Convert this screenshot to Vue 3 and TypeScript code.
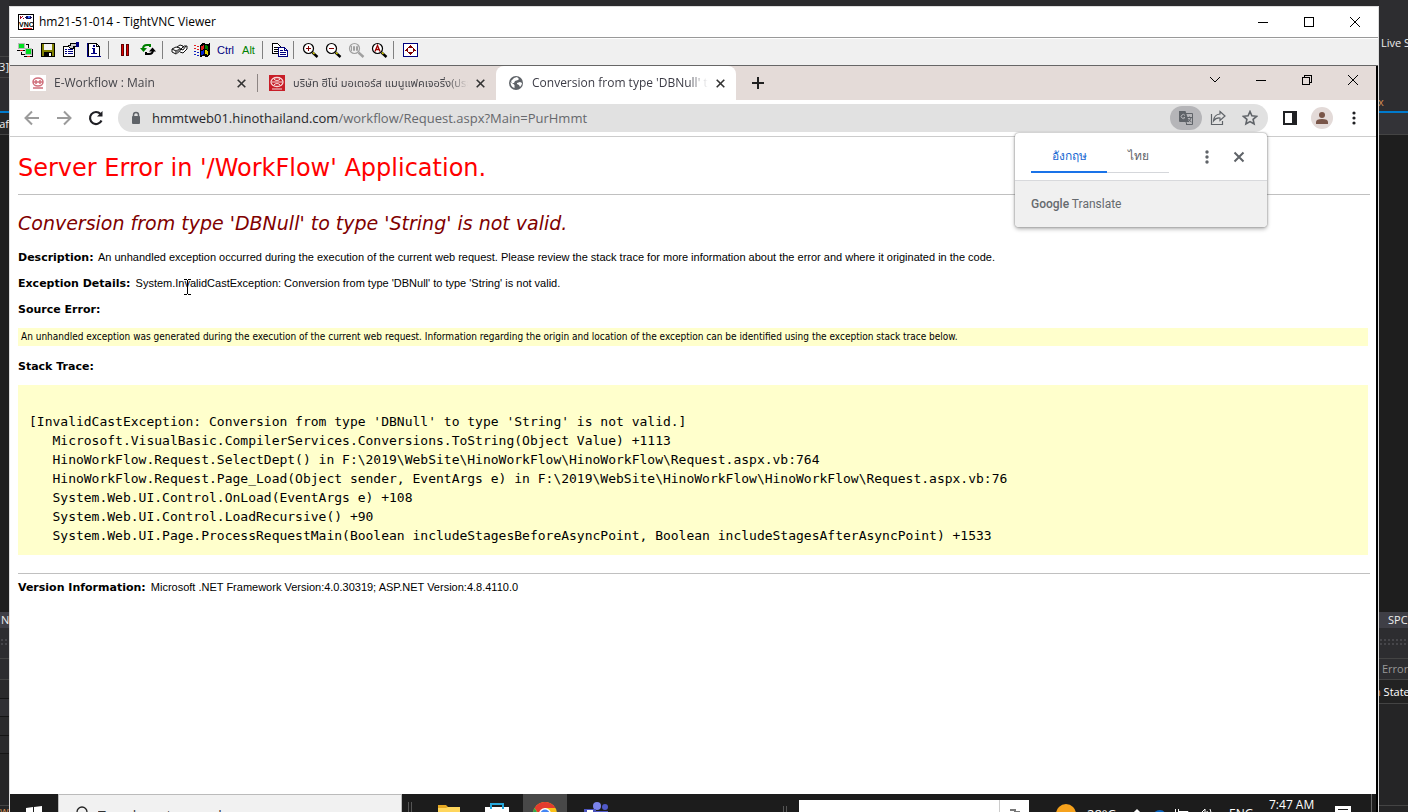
<script setup lang="ts">
interface Tool { id: string; label: string; sep?: boolean }
const tools: Tool[] = [
  { id: 'connect', label: 'New connection' },
  { id: 'save', label: 'Save session' },
  { id: 'options', label: 'Connection options' },
  { id: 'info', label: 'Connection info' },
  { id: 'pause', label: 'Pause', sep: true },
  { id: 'refresh', label: 'Refresh screen' },
  { id: 'cad', label: 'Send Ctrl-Alt-Del', sep: true },
  { id: 'win', label: 'Send Win key' },
  { id: 'ctrl', label: 'Ctrl' },
  { id: 'alt', label: 'Alt' },
  { id: 'copy', label: 'Transfer files', sep: true },
  { id: 'zin', label: 'Zoom in', sep: true },
  { id: 'zout', label: 'Zoom out' },
  { id: 'z100', label: 'Zoom 100%' },
  { id: 'zauto', label: 'Zoom auto' },
  { id: 'full', label: 'Full screen', sep: true },
]
const trace = `[InvalidCastException: Conversion from type 'DBNull' to type 'String' is not valid.]
   Microsoft.VisualBasic.CompilerServices.Conversions.ToString(Object Value) +1113
   HinoWorkFlow.Request.SelectDept() in F:\\2019\\WebSite\\HinoWorkFlow\\HinoWorkFlow\\Request.aspx.vb:764
   HinoWorkFlow.Request.Page_Load(Object sender, EventArgs e) in F:\\2019\\WebSite\\HinoWorkFlow\\HinoWorkFlow\\Request.aspx.vb:76
   System.Web.UI.Control.OnLoad(EventArgs e) +108
   System.Web.UI.Control.LoadRecursive() +90
   System.Web.UI.Page.ProcessRequestMain(Boolean includeStagesBeforeAsyncPoint, Boolean includeStagesAfterAsyncPoint) +1533`
</script>

<template>
  <div class="desktop">
    <aside class="side left">
      <div class="s-top"><span class="brk">3]</span></div>
      <div class="s-tab"><span>raf</span></div>
      <div class="s-code"></div>
      <div class="s-bar"><span>N</span></div>
      <div class="s-dots"></div>
      <div class="s-box"></div>
      <div class="s-cells"><i></i><i class="lit"></i><i></i><i></i></div>
      <div class="s-rest"></div>
      <div class="s-foot">w</div>
    </aside>

    <main class="window">
      <header class="titlebar">
        <svg class="vnc" width="16" height="16" viewBox="0 0 16 16" shape-rendering="crispEdges">
          <rect x=".5" y=".5" width="15" height="15" fill="#fff" stroke="#000" />
          <path d="M2 2h1v1h1v1h-1v1h-1zM4 2h1v1h-1zM5 4h1v1h-1z" fill="#a00020" />
          <path d="M7 3h1V2h5v1h1v1h-1v1H8V4H7z" fill="#101060" /><rect x="10" y="2" width="2" height="2" fill="#4070ff" />
          <text x="1" y="13" font-size="7" font-weight="bold" font-family="Liberation Sans">VNC</text>
          <path d="M5 14.500h9" stroke="#e02020" />
        </svg>
        <h1>hm21-51-014 - TightVNC Viewer</h1>
        <button class="wc" aria-label="Minimize"><svg width="12" height="12"><path d="M1 6.500h10" /></svg></button>
        <button class="wc" aria-label="Maximize"><svg width="12" height="12"><path d="M1.500 1.500h9v9h-9z" /></svg></button>
        <button class="wc" aria-label="Close"><svg class="smooth" width="12" height="12"><path d="M1 1l10 10M11 1L1 11" /></svg></button>
      </header>

      <nav class="vncbar" aria-label="Viewer toolbar">
        <template v-for="t in tools" :key="t.id">
          <span v-if="t.sep" class="sep"></span>
          <button :aria-label="t.label" :class="t.id">
            <template v-if="t.id === 'ctrl' || t.id === 'alt'">{{ t.label }}</template>
            <svg v-else width="17" height="16" viewBox="0 0 17 16" shape-rendering="crispEdges" fill="none">
              <g v-if="t.id === 'connect'">
                <rect x="1.500" y="1.500" width="6" height="5" fill="#00e020" stroke="#b8b8b8" /><path d="M0 8.500h8M9 2.500h2.500v3" stroke="#000" /><path d="M3 8.500h3" stroke="#e02020" />
                <rect x="8.500" y="6.500" width="6" height="6" fill="#00e020" stroke="#b8b8b8" /><path d="M7 14.500h9M15.500 7v7M4.500 10v2h3" stroke="#000" /><path d="M10 14.500h3" stroke="#e02020" />
              </g>
              <g v-else-if="t.id === 'save'">
                <rect x="1.500" y="1.500" width="13" height="13" fill="#808000" stroke="#000" /><rect x="4" y="2" width="8" height="6" fill="#f4f4f4" /><rect x="4" y="10" width="8" height="4" fill="#000" /><rect x="9" y="11" width="2" height="3" fill="#fff" />
              </g>
              <g v-else-if="t.id === 'options'">
                <path d="M.5 4.500h11v10H.500z" fill="#fff" stroke="#000" /><path d="M2 7.500h2M5 7.500h5M2 9.500h2M5 9.500h5M2 11.500h2M5 11.500h5" stroke="#000080" /><path d="M5.500 4.500V3.500h2v-2h6v3h-3v2h-3z" fill="#ccc" stroke="#000" /><path d="M13 0h3v5h-3z" fill="#000080" />
              </g>
              <g v-else-if="t.id === 'info'">
                <path d="M2.500 1.500h8l3 3v10h-11z" fill="#fff" stroke="#000" /><path d="M10.500 1.500v3h3" stroke="#000" /><path d="M1.500 1v13.500H15" stroke="#000080" /><path d="M7 3h2v2H7zM6 6h3v5h2v1H5v-1h2V7H6z" fill="#000080" />
              </g>
              <g v-else-if="t.id === 'pause'"><path d="M4.500 2.500h2v11h-2zM9.500 2.500h2v11h-2z" fill="#e00000" stroke="#600000" /></g>
              <g v-else-if="t.id === 'refresh'" shape-rendering="auto">
                <path d="M3 7q0-4 4-4h3v2" stroke="#008000" stroke-width="2" /><path d="M0 6h7L3.500 10z" fill="#008000" /><path d="M13 8q0 4-4 4H6v-2" stroke="#000" stroke-width="2" /><path d="M16 9.500H9L12.500 5.500z" fill="#000" />
              </g>
              <g v-else-if="t.id === 'cad'" shape-rendering="auto">
                <path d="M1 7l4-2 4 1v3l-4 3-4-2zM1 7l4 2 4-2M5 9v3M6 5l3-2 3 1v2M9 8l4-4h3v3l-4 4-3-1M9 7l3 1 3-4" stroke="#111" fill="#fff" /><path d="M5 9l4-2v2l-4 3z" fill="#777" />
              </g>
              <g v-else-if="t.id === 'win'">
                <path d="M6 3l3-2 4 1 3-1v12l-3 2-4-1-3 1z" fill="#000" /><path d="M7 4l3-1v4l-3 1z" fill="#e02020" /><path d="M11 3l3 1v4l-3-1z" fill="#008000" /><path d="M7 9l3-1v4l-3 1z" fill="#0020d0" /><path d="M11 8l3 1v4l-3-1z" fill="#e0d000" /><path d="M0 3.500h2M3 4.500h2M0 6.500h2M3 7.500h2" stroke="#e02020" /><path d="M0 9.500h2M3 10.500h2M0 12.500h2M3 13.500h2" stroke="#1020c0" />
              </g>
              <g v-else-if="t.id === 'copy'">
                <path d="M1.500 1.500h5l3 3v7h-8z" fill="#fff" stroke="#000" /><path d="M3 5.500h4M3 7.500h4M3 9.500h4" stroke="#000" /><path d="M7.500 5.500h6l3 3v6h-9z" fill="#fff" stroke="#000080" /><path d="M13.500 5.500v3h3M9 8.500h3M9 10.500h6M9 12.500h6" stroke="#000080" />
              </g>
              <g v-else-if="t.id === 'full'">
                <rect x="1.500" y="1.500" width="14" height="13" fill="#fff" stroke="#000080" />
                <path d="M8 3h1v1h1v1h1v1H6V5h1V4h1zM8 13h1v-1h1v-1h1v-1H6v1h1v1h1zM3 8h1V7h1V6h1v4H5V9H3zM14 8h-1V7h-1V6h-1v4h1V9h2z" fill="#800000" />
              </g>
              <g v-else shape-rendering="auto" :stroke="t.id === 'z100' ? '#a0a0a0' : '#000'">
                <circle cx="6.500" cy="6.500" r="5" :fill="t.id === 'z100' ? '#eee' : '#fff'" stroke-width="1.200" />
                <path d="M10.500 10.500l5 4.500" stroke-width="2.400" />
                <path v-if="t.id !== 'z100'" d="M11 10.500l1.500 1.500" stroke="#d8d000" stroke-width="1.500" />
                <path v-if="t.id === 'zin'" d="M4 6.500h5M6.500 4v5" stroke="#800000" />
                <path v-if="t.id === 'zout'" d="M4 6.500h5" stroke="#800000" />
                <path v-if="t.id === 'z100'" d="M3.500 4v5M5.500 4.500h1v4h-1zM8.500 4.500h1v4h-1z" />
                <path v-if="t.id === 'zauto'" d="M4 9.500l2.500-6 2.500 6M5 7.500h3" stroke="#a00000" stroke-width="1.300" />
              </g>
            </svg>
          </button>
        </template>
      </nav>

      <section class="remote">
        <div class="tabstrip">
          <div class="tab">
            <svg class="fav" width="16" height="16"><rect width="16" height="16" fill="#fff" /><ellipse cx="8" cy="7" rx="5" ry="4" fill="none" stroke="#d0707c" stroke-width="1.500" /><path d="M3 7h10M6 5v4M10 5v4M3 13h10" stroke="#d0707c" stroke-width="1.500" /></svg>
            <span class="tt">E-Workflow : Main</span>
            <button class="x" aria-label="Close tab"><svg width="9" height="9"><path d="M.7.700l7.600 7.600M8.300.700L.7 8.300" /></svg></button>
          </div>
          <div class="tab second">
            <svg class="fav" width="16" height="16"><rect width="16" height="16" fill="#c81e28" /><ellipse cx="8" cy="7" rx="6" ry="4.500" fill="none" stroke="#f6d8d8" stroke-width="1.300" /><path d="M3 7h10M5 3.500q0 2 3 2t3-2M5 10.500q0-2 3-2t3 2M3 14h10" stroke="#f6d8d8" fill="none" /></svg>
            <span class="tt thai">บริษัท ฮีโน่ มอเตอร์ส แมนูแฟคเจอริ่ง(ประเทศไทย)</span>
            <button class="x" aria-label="Close tab"><svg width="9" height="9"><path d="M.7.700l7.600 7.600M8.300.700L.7 8.300" /></svg></button>
          </div>
          <div class="tab active">
            <svg class="fav" width="16" height="16"><circle cx="8" cy="8" r="7" fill="#5f6368" /><path d="M2.500 7l3 2 1 1v3q-4-1-4-6zM6 3l3-1 2 2-1 1-3 1-1 2H4L3 6zM9 8l3-1 2 1q0 2-2 4l-1-2-2-1z" fill="#fff" /></svg>
            <span class="tt">Conversion from type 'DBNull' to type</span>
            <button class="x" aria-label="Close tab"><svg width="9" height="9"><path d="M.7.700l7.600 7.600M8.300.700L.7 8.300" /></svg></button>
          </div>
          <button class="plus" aria-label="New tab"><svg width="12" height="12"><path d="M6 0v12M0 6h12" /></svg></button>
          <span class="grow"></span>
          <button class="cc" aria-label="Search tabs"><svg class="smooth" width="12" height="12"><path d="M1 3l5 5 5-5" /></svg></button>
          <button class="cc" aria-label="Minimize"><svg width="12" height="12"><path d="M1 6.500h10" /></svg></button>
          <button class="cc" aria-label="Restore"><svg width="12" height="12"><path d="M1.500 3.500h7v7h-7zM3.500 3V1.500h7v7H9" /></svg></button>
          <button class="cc" aria-label="Close"><svg class="smooth" width="12" height="12"><path d="M1 1l10 10M11 1L1 11" /></svg></button>
        </div>

        <div class="addressbar">
          <button class="nb" aria-label="Back"><svg width="16" height="16" stroke="#9b9b9b" stroke-width="2" fill="none"><path d="M15 8H2M8 1.500L1.500 8 8 14.500" /></svg></button>
          <button class="nb" aria-label="Forward"><svg width="16" height="16" stroke="#9b9b9b" stroke-width="2" fill="none"><path d="M1 8h13M8 1.500L14.500 8 8 14.500" /></svg></button>
          <button class="nb" aria-label="Reload"><svg width="16" height="16" stroke="#1f1f24" stroke-width="2.200" fill="none"><path d="M13.500 10.500A6 6 0 1 1 12.500 4" /><path d="M14.500 1v5.500H9z" fill="#1f1f24" stroke="none" /></svg></button>
          <div class="omni">
            <svg class="lock" width="12" height="14"><path d="M3.500 6V4a2.500 2.500 0 0 1 5 0v2" fill="none" stroke="#5f6368" stroke-width="1.500" /><rect x="2" y="5" width="8" height="8" rx="1" fill="#5f6368" /></svg>
            <span class="url"><b>hmmtweb01.hinothailand.com</b>/workflow/Request.aspx?Main=PurHmmt</span>
            <button class="pill" aria-label="Translate this page"><svg width="16" height="16"><path d="M5 3.500h9.500v11H8" stroke="#5f6368" fill="none" /><path d="M1 1h6.500l3.500 11H2q-1 0-1-1z" fill="#5f6368" /><path d="M7 5.500A2 2 0 1 0 7 7.500H5.500" stroke="#b5b5b8" fill="none" /><path d="M9 7.500h5M11.500 6.500v1M13 8q-1 3-3 4M10.500 9q1 2 3 3M8 12l1 3" stroke="#5f6368" fill="none" /></svg></button>
            <button class="ob" aria-label="Share"><svg width="16" height="16" fill="none" stroke="#5f6368" stroke-width="1.200"><path d="M1.500 4v10.500h11V11" /><path d="M10 1.500l5 4.500-5 4.500V8Q6 7.500 3.500 11q.5-6.500 6.500-7z" /></svg></button>
            <button class="ob" aria-label="Bookmark this tab"><svg width="16" height="16" fill="none" stroke="#5f6368" stroke-width="1.600"><path d="M8 1.500l1.900 4.300 4.700.5-3.500 3.100 1 4.600L8 11.600 3.900 14l1-4.600-3.500-3.100 4.700-.5z" /></svg></button>
          </div>
          <button class="nb" aria-label="Side panel"><svg width="14" height="14"><rect x="1" y="1" width="12" height="12" fill="#fff" stroke="#202124" stroke-width="2" /><rect x="9" width="5" height="14" fill="#202124" /></svg></button>
          <button class="nb" aria-label="Profile"><svg width="22" height="22"><circle cx="11" cy="11" r="11" fill="#e3dad8" /><circle cx="11" cy="8" r="3" fill="#795548" /><path d="M5 17v-2q0-3 6-3t6 3v2z" fill="#795548" /></svg></button>
          <button class="nb" aria-label="Menu"><svg width="4" height="14" fill="#202124"><circle cx="2" cy="2" r="1.600" /><circle cx="2" cy="7" r="1.600" /><circle cx="2" cy="12" r="1.600" /></svg></button>
        </div>

        <div class="popup" role="dialog" aria-label="Google Translate">
          <div class="poptop">
            <button class="lang on">อังกฤษ</button>
            <button class="lang">ไทย</button>
            <span class="grow"></span>
            <button class="pb" aria-label="Translate options"><svg width="4" height="14" fill="#5f6368"><circle cx="2" cy="2" r="1.700" /><circle cx="2" cy="7" r="1.700" /><circle cx="2" cy="12" r="1.700" /></svg></button>
            <button class="pb" aria-label="Close"><svg width="12" height="12"><path d="M1.500 1.500l9 9M10.500 1.500l-9 9" stroke="#5f6368" stroke-width="2" /></svg></button>
          </div>
          <div class="popbot"><b>Google</b> Translate</div>
        </div>

        <article class="page">
          <h1>Server Error in '/WorkFlow' Application.</h1>
          <hr>
          <h2>Conversion from type 'DBNull' to type 'String' is not valid.</h2>
          <p><b>Description:</b> An unhandled exception occurred during the execution of the current web request. Please review the stack trace for more information about the error and where it originated in the code.</p>
          <p><b>Exception Details:</b> System.InvalidCastException: Conversion from type 'DBNull' to type 'String' is not valid.</p>
          <p><b>Source Error:</b></p>
          <div class="note">An unhandled exception was generated during the execution of the current web request. Information regarding the origin and location of the exception can be identified using the exception stack trace below.</div>
          <p><b>Stack Trace:</b></p>
          <pre>{{ trace }}</pre>
          <hr class="end">
          <p class="ver"><b>Version Information:</b> Microsoft .NET Framework Version:4.0.30319; ASP.NET Version:4.8.4110.0</p>
          <svg class="cursor" width="9" height="16" fill="none" stroke="#000" shape-rendering="crispEdges"><path d="M1 .500h3M5 .500h3M4.500 1v14M1 15.500h3M5 15.500h3" /></svg>
        </article>

        <footer class="taskbar">
          <button class="start" aria-label="Start"><svg width="16" height="16" fill="#fff"><path d="M0 2l7-1v7H0zM8 .900L16 0v8H8zM0 9h7v6l-7-1zM8 9h8v7l-8-1z" /></svg></button>
          <label class="search"><svg width="14" height="18" fill="none" stroke="#222" stroke-width="1.300"><circle cx="7" cy="6" r="5" /><path d="M4 10l-3 5" /></svg><input type="text" placeholder="Type here to search" aria-label="Type here to search"></label>
          <span class="grip g1"></span>
          <button class="app folder" aria-label="File Explorer"><svg width="22" height="18"><path d="M0 1h8l2 2h12v15H0z" fill="#e5a823" /><path d="M0 4h8l2-1h12v15H0z" fill="#ffd65c" /></svg></button>
          <button class="app store" aria-label="Store"><svg width="24" height="20"><path d="M0 4h24v16H0z" fill="#fff" /><path d="M6 6V1h12v5" stroke="#27a9dd" stroke-width="2" fill="none" /></svg></button>
          <button class="app chrome" aria-label="Chrome"><svg width="24" height="24"><circle cx="12" cy="12" r="12" fill="#fbc116" /><path d="M1.600 6A12 12 0 0 1 22.400 6H12L7 14z" fill="#e33b2e" /><path d="M1.600 6A12 12 0 0 0 12 24l4-9H7z" fill="#2da94f" /><circle cx="12" cy="12" r="6" fill="#fff" /><circle cx="12" cy="12" r="4.500" fill="#4285f4" /></svg></button>
          <button class="app teams" aria-label="Teams"><svg width="26" height="24"><circle cx="13" cy="4" r="4" fill="#7b83eb" /><circle cx="21" cy="5" r="3" fill="#5059c9" /><path d="M7 9h17v12H7z" fill="#5059c9" /><rect y="7" width="12" height="12" fill="#4b53bc" /><path d="M3 9h6M6 9v7" stroke="#fff" stroke-width="2" /></svg></button>
          <span class="grow"></span>
          <span class="grip g2"></span>
          <div class="addr"><span></span><svg width="10" height="12"><path d="M0 2h6M5 1v3h5v8" stroke="#777" stroke-width="2" fill="none" /></svg></div>
          <svg class="sun" width="22" height="22"><circle cx="10" cy="10" r="10" fill="#f6a21c" /><circle cx="17" cy="15" r="6" fill="#c9c9cc" /></svg>
          <span class="tx temp">28°C</span>
          <svg class="tray" width="92" height="14" fill="none" stroke="#fff"><path d="M2 6l4-4 4 4" stroke-width="1.500" /><path d="M21 9q2-7 8-7 5 0 6 6z" fill="#0a66c2" stroke="none" /><path d="M48 3.500h9v8h-9M44.500 1v4M47.500 1v4M43 4.500h6M46 5v6" /><path d="M68 5h2l4-4v12l-4-4h-2zM76 3q2 4 0 8M79 1q3 5 0 10" /></svg>
          <span class="tx eng">ENG</span>
          <span class="tx time">7:47 AM</span>
          <svg class="notif" width="16" height="16"><path d="M0 0h16v12H0z" fill="#fff" /><path d="M3 3.500h10M3 7.500h10" stroke="#1c1c1c" /></svg>
          <span class="peek"></span>
        </footer>
      </section>
    </main>

    <aside class="side right">
      <div class="s-top"><span class="live">Live Share</span><span class="cx">x</span></div>
      <div class="s-tab"></div>
      <div class="s-code"></div>
      <div class="s-bar"><span>SPC</span></div>
      <div class="s-dots"></div>
      <div class="s-box"><span>Error List</span></div>
      <div class="s-state"><span class="n">n</span> State</div>
      <div class="s-rest"></div>
      <div class="s-foot"></div>
    </aside>
  </div>
</template>

<style>
html, body { margin: 0; background: #1e1e1e; }
</style>

<style scoped>
* { box-sizing: border-box; }
.desktop { display: grid; grid-template-columns: 9px minmax(0, 1fr) 29px; height: 100vh; overflow: hidden; background: #2a2a2c; font: 12px/16px "Open Sans", "Noto Sans", sans-serif; }
button { border: 0; background: none; padding: 0; margin: 0; font: inherit; color: inherit; display: flex; align-items: center; justify-content: center; flex: none; }
svg { display: block; flex: none; }
h1, h2, p, pre { margin: 0; font-weight: normal; }
.grow { flex: 1; }

.side { display: flex; flex-direction: column; overflow: hidden; color: #eee; white-space: nowrap; min-width: 0; font-size: 11px; }
.side > div { flex: none; overflow: hidden; }
.side .s-top { height: 111px; background: #2d2d30; display: flex; flex-direction: column; }
.left .s-top { align-items: flex-end; padding-top: 56px; }
.left .brk { border-top: 1px solid #444; border-bottom: 1px solid #444; height: 22px; width: 9px; line-height: 20px; display: flex; justify-content: flex-end; }
.right .s-top { padding: 35px 0 2px 2px; justify-content: space-between; }
.right .cx { color: #d08a50; margin-left: -3px; line-height: 14px; }
.side .s-tab { height: 24px; border-top: 2px solid #007acc; border-bottom: 1px solid #444; background: #333337; display: flex; justify-content: flex-end; align-items: center; }
.left .s-tab { background: #252526; }
.side > .s-code { flex: 1; background: #1e1e1e; }
.side .s-bar { height: 16px; background: #3f3f46; padding-left: 9px; }
.left .s-bar { padding-left: 1px; }
.side .s-dots { height: 30px; background: radial-gradient(circle, #46464a 1px, transparent 1px) 0 0 / 4px 4px #2d2d30; border-top: 10px solid #2d2d30; border-bottom: 12px solid #2d2d30; }
.side .s-box { height: 22px; background: #2d2d30; border-top: 1px solid #444; border-bottom: 1px solid #444; color: #999; line-height: 20px; padding-left: 3px; }
.side .s-state { height: 24px; border-bottom: 1px solid #444; background: #222; line-height: 23px; color: #fff; }
.side .n { color: #d08a50; margin-left: -5px; }
.s-cells { height: 74px; display: flex; flex-direction: column; }
.s-cells i { flex: 1; border-bottom: 1px solid #151515; }
.s-cells .lit { background: #303034; }
.side .s-rest { height: 102px; background: #252526; border-bottom: 1px solid #444; }
.left .s-rest { height: 52px; }
.side .s-foot { height: 6px; line-height: 10px; color: #d08a50; background: #252526; }

.window { margin-top: 6px; display: flex; flex-direction: column; background: #fff; border: solid #ddd; border-width: 1px 1px 0; min-width: 0; overflow: hidden; }
.titlebar { height: 31px; flex: none; display: flex; align-items: center; padding-left: 8px; border-bottom: 1px solid #999; }
.titlebar h1 { flex: 1; margin-left: 5px; font-size: 12px; line-height: 16px; }
.wc { width: 46px; height: 28px; }
.wc svg, .cc svg { fill: none; stroke: #000; shape-rendering: crispEdges; }
.wc svg.smooth, .cc svg.smooth { shape-rendering: auto; }
.vncbar { height: 28px; flex: none; display: flex; align-items: center; padding: 0 0 4px 4px; background: #f0f0f0; border-bottom: 1px solid #666; border-top: 1px solid #fff; }
.vncbar button { width: 23px; height: 22px; font: 11px/16px "Liberation Sans", sans-serif; }
.vncbar .ctrl { color: #000080; }
.vncbar .alt { color: #008000; }
.sep { width: 8px; height: 18px; border-left: 1px solid #808080; margin-left: 2px; margin-right: -2px; flex: none; }

.remote { flex: 1; min-height: 0; display: flex; flex-direction: column; position: relative; border-right: 2px solid #000; }
.tabstrip { flex: none; height: 34px; display: flex; background: #e4dbd8; padding-left: 8px; color: #45454a; }
.tab { width: 239px; flex: none; display: flex; align-items: center; padding: 0 11px 0 12px; }
.tab .tt { flex: 1; min-width: 0; margin: 0 8px; white-space: nowrap; overflow: hidden; mask-image: linear-gradient(to left, transparent, #000 20px); }
.tab .thai { font-size: 11px; font-family: "Open Sans", "Noto Sans Thai", "Noto Sans", sans-serif; }
.tab.second { background: linear-gradient(#8d8583, #8d8583) 0 8px / 1px 18px no-repeat; }
.tab.active { width: 240px; background: #fff; border-radius: 8px 8px 0 0; color: #3c3c46; }
.x svg { fill: none; stroke: #333; stroke-width: 1.6; }
.plus { width: 44px; }
.plus svg { stroke: #202020; stroke-width: 2; }
.cc { width: 46px; height: 28px; }
.addressbar { flex: none; height: 37px; border-bottom: 1px solid #ccc; display: flex; align-items: center; padding: 0 6px; }
.nb { width: 32px; height: 32px; }
.omni { flex: 1; min-width: 0; height: 28px; margin: 0 6px; border-radius: 14px; background: #e1e1e1; display: flex; align-items: center; padding: 0 2px 0 12px; }
.url { flex: 1; min-width: 0; margin-left: 10px; font-size: 13px; line-height: 20px; color: #66686c; white-space: nowrap; overflow: hidden; }
.url b { font-weight: normal; color: #26262b; }
.pill { width: 32px; height: 24px; border-radius: 12px; background: #b5b5b8; }
.ob { width: 32px; height: 28px; }

.popup { position: absolute; top: 67px; right: 109px; width: 252px; border-radius: 4px; overflow: hidden; background: #fff; box-shadow: 0 0 2px #777, 0 2px 4px rgba(0, 0, 0, .3); z-index: 2; }
.poptop { height: 47px; display: flex; padding: 0 12px 0 16px; align-items: center; }
.lang { height: 33px; width: 62px; border-bottom: 1px solid #d5d7db; color: #5f6368; font-weight: 500; }
.lang.on { width: 76px; border-bottom: 2px solid #1a73e8; color: #1967d2; }
.pb { width: 32px; height: 32px; }
.popbot { height: 47px; border-top: 1px solid #d8d9dc; background: #f0f0f0; padding-left: 16px; font-family: Roboto, sans-serif; line-height: 46px; color: #666a6e; }
.popbot b { font-weight: 500; }

.page { flex: 1; min-height: 0; position: relative; padding: 16px 6px 0 8px; overflow: hidden; background: #fff; font: 11px/16px "Liberation Sans", Arial, sans-serif; color: #000; }
.page h1 { font: 24px/30px "DejaVu Sans", Verdana, sans-serif; color: #f00; }
.page hr { border: 0; border-top: 1px solid #c0c0c0; margin: 11px 0 16px; }
.page h2 { font: italic 19px/24px "DejaVu Sans", Verdana, sans-serif; color: #800000; margin-bottom: 14px; }
.page p { margin-bottom: 10px; }
.page p b { font: bold 11px/12px "DejaVu Sans", Verdana, sans-serif; margin-right: 2px; }
.page .note { background: #ffffcc; height: 18px; margin: 11px 2px 12px 0; padding-left: 3px; font: 10px/18px "DejaVu Sans Condensed", Tahoma, sans-serif; white-space: nowrap; }
.page pre { background: #ffffcc; margin: 11px 2px 0 0; padding: 27px 11px 10px; font: 13px/19px "DejaVu Sans Mono", Consolas, monospace; overflow: hidden; }
.page hr.end { margin: 18px 0 5px; }
.cursor { position: absolute; left: 173px; top: 142px; }

.taskbar { flex: none; height: 18px; overflow: hidden; display: flex; align-items: flex-start; background: #1c1c1c; color: #fff; }
.start { width: 48px; padding-top: 12px; }
.search { width: 344px; height: 40px; background: #f1f1f1; border: 1px solid #bbb; display: flex; padding: 11px 0 0 16px; flex: none; }
.search input { border: 0; background: none; margin: 0 0 0 9px; padding: 0; height: 20px; font: 14px/20px "Open Sans", sans-serif; color: #333; }
.search input::placeholder { color: #333; opacity: 1; }
.grip { width: 4px; height: 18px; border: solid #555; border-width: 0 1px; margin-top: 12px; flex: none; }
.g1 { margin-left: 6px; margin-top: 8px; }
.app { width: 48px; height: 40px; align-items: flex-start; }
.folder { margin-left: 13px; padding-top: 10px; }
.store { padding-top: 9px; }
.chrome { background: #484848; padding-top: 8px; width: 44px; margin-left: 2px; }
.teams { padding-top: 8px; width: 60px; }
.addr { width: 230px; height: 30px; margin: 6px 0 0 12px; background: #fff; display: flex; padding: 8px 9px 0 0; flex: none; }
.addr span { flex: 1; margin: -8px 10px 0 0; border-right: 1px solid #ccc; height: 30px; }
.sun { margin: 10px 0 0 27px; }
.tx { flex: none; white-space: nowrap; }
.temp { margin: 10px 0 0 9px; font-size: 13px; line-height: 20px; width: 30px; }
.tray { margin: 14px 0 0 14px; }
.eng { margin: 12px 0 0 6px; width: 40px; }
.time { margin: 3px 0 0; width: 66px; }
.notif { margin-top: 12px; }
.peek { width: 5px; height: 40px; border-left: 1px solid #666; margin-left: 20px; flex: none; }
</style>
